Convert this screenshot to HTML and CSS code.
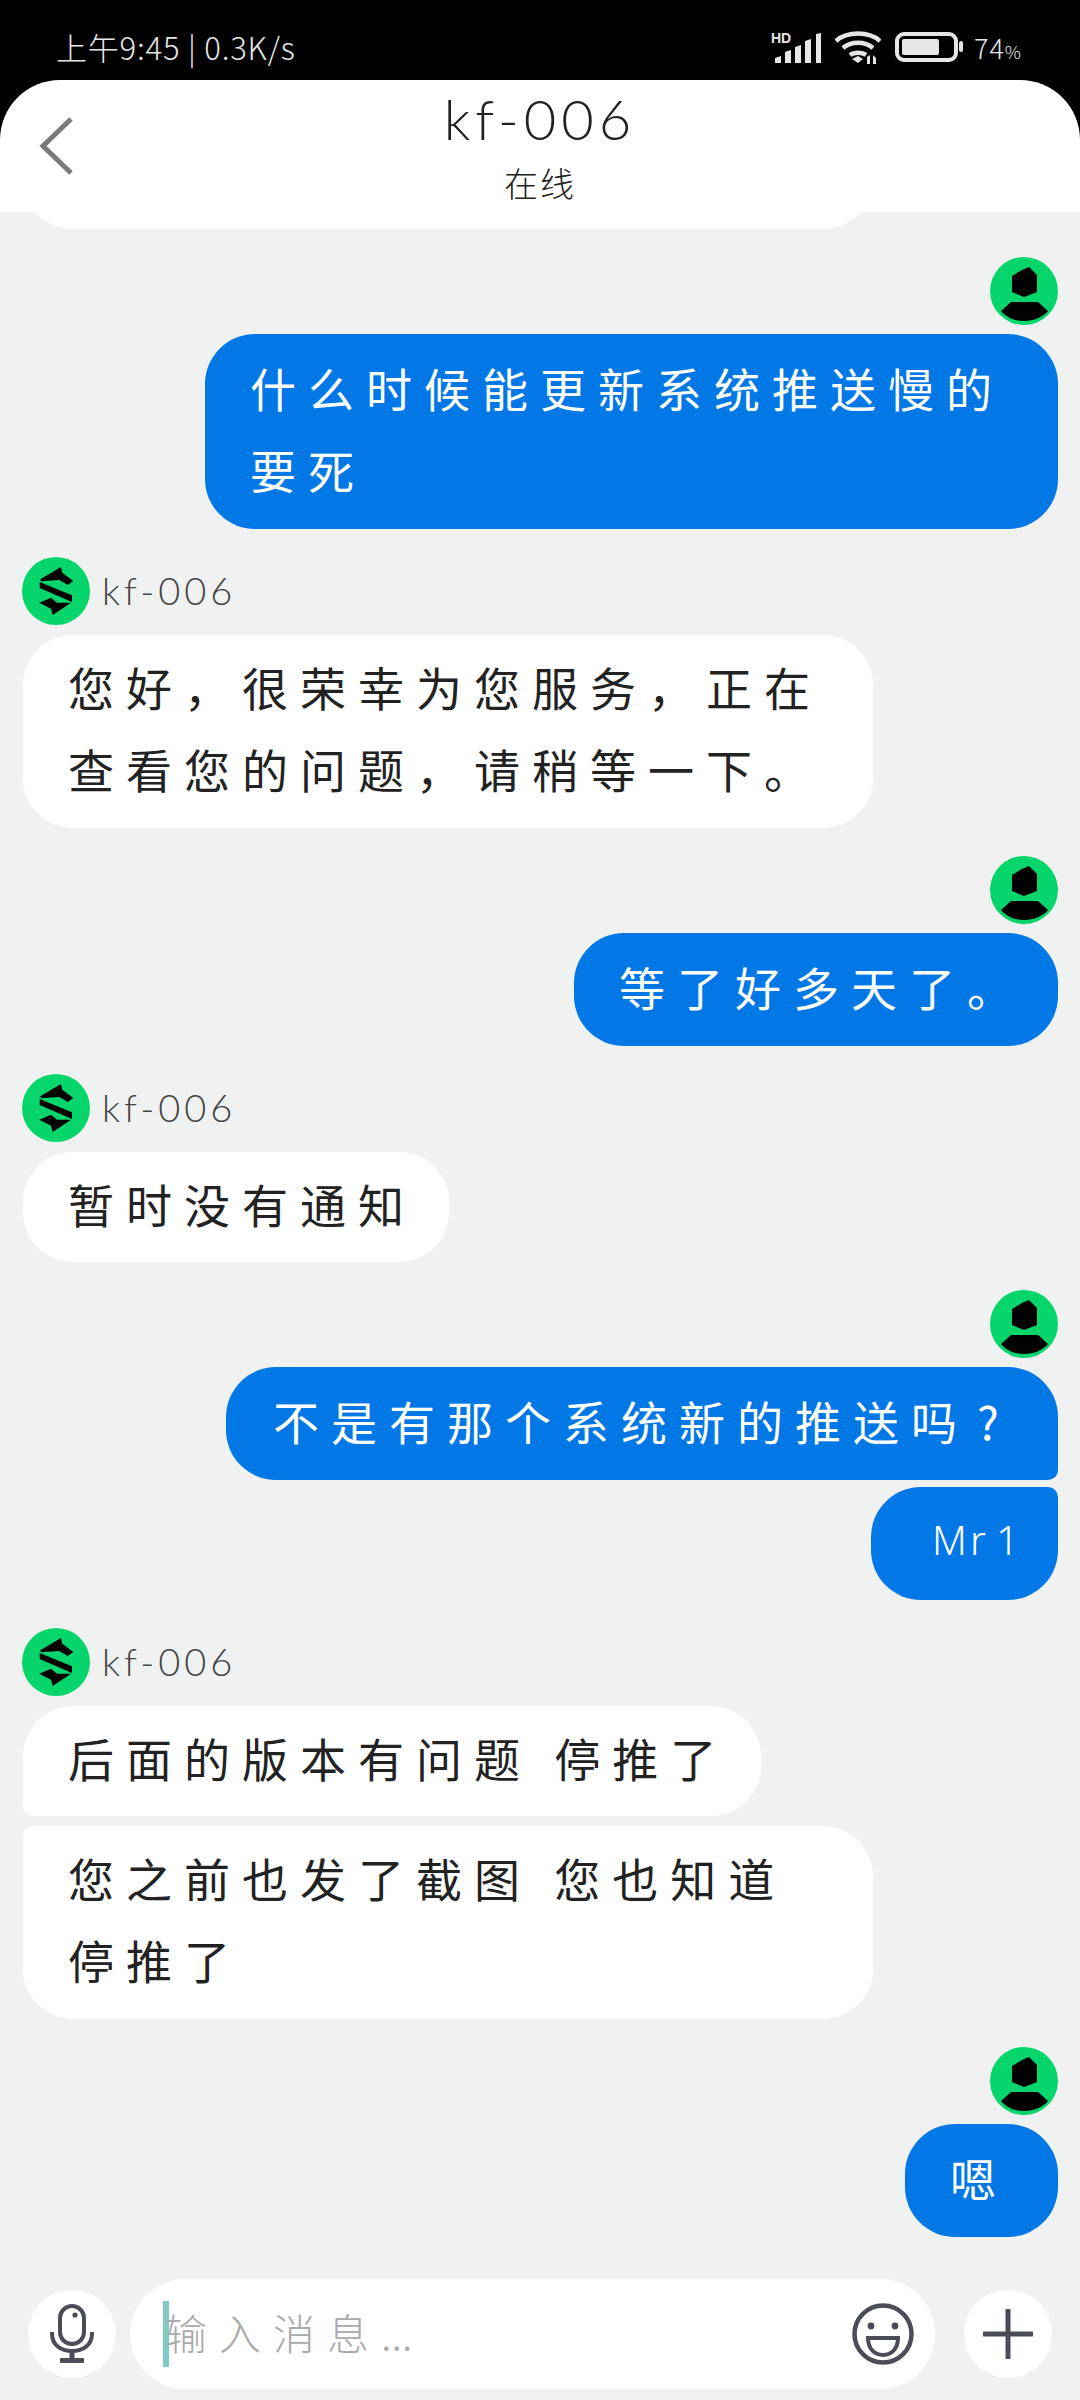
FILE: index.html
```html
<!DOCTYPE html>
<html lang="zh">
<head>
<meta charset="utf-8">
<title>kf-006</title>
<link rel="stylesheet" href="styles.css">
</head>
<body>
<div class="phone">
  <div class="status">
    <div class="status-left">上午9:45 | 0.3K/s</div>
    <div class="status-right">
      <svg class="ic-signal" width="50" height="35" viewBox="0 -4 50 35"><text class="hd" x="0" y="11">HD</text><path fill="#e6e6e6" d="M4 26l6-2v7H4zM14 20l6-2v13h-6zM24 15l6-2v18h-6zM34 9l6-2v24h-6zM45 2l5-1v30h-5z"/></svg>
      <svg class="ic-wifi" width="46" height="33" viewBox="0 0 46 33"><g fill="none" stroke="#e6e6e6" stroke-width="4.5"><path d="M1 10C12 0 34 0 45 10"/><path d="M8 17c8-7 22-7 30 0"/><path d="M15 24c4-3 12-3 16 0"/></g><path fill="#e6e6e6" d="M17 28l6-3 5 3-5 4zM32 33v-7l3-2v9zM38 33v-9l3 3v6z"/></svg>
      <svg class="ic-batt" width="68" height="30" viewBox="0 0 68 30"><rect x="2" y="2" width="59" height="26" rx="7" fill="none" stroke="#e6e6e6" stroke-width="4"/><rect x="7" y="7" width="37" height="16" rx="2" fill="#e6e6e6"/><rect x="64" y="9" width="4" height="11" rx="2" fill="#e6e6e6"/></svg>
      <span class="batt-num">74<small>%</small></span>
    </div>
  </div>

  <header class="head">
    <svg class="back" width="36" height="60" viewBox="0 0 36 60"><path d="M33 3L5 30l28 27" fill="none" stroke="#7a7a7a" stroke-width="5"/></svg>
    <div class="head-title">kf-006</div>
    <div class="head-sub">在线</div>
  </header>

  <main class="chat">
    <div class="bubble them cut"></div>

    <div class="who me"><svg class="av" viewBox="0 0 68 68"><use href="#user"/></svg></div>
    <div class="bubble me wide">什么时候能更新系统推送慢的要死</div>

    <div class="who"><svg class="av" viewBox="0 0 68 68"><use href="#logo"/></svg><span class="name">kf-006</span></div>
    <div class="bubble them wide">您好，很荣幸为您服务，正在查看您的问题，请稍等一下。</div>

    <div class="who me"><svg class="av" viewBox="0 0 68 68"><use href="#user"/></svg></div>
    <div class="bubble me">等了好多天了。</div>

    <div class="who"><svg class="av" viewBox="0 0 68 68"><use href="#logo"/></svg><span class="name">kf-006</span></div>
    <div class="bubble them">暂时没有通知</div>

    <div class="who me"><svg class="av" viewBox="0 0 68 68"><use href="#user"/></svg></div>
    <div class="bubble me first long">不是有那个系统新的推送吗<span class="q">?</span></div>
    <div class="bubble me last mr">Mr 1</div>

    <div class="who"><svg class="av" viewBox="0 0 68 68"><use href="#logo"/></svg><span class="name">kf-006</span></div>
    <div class="bubble them first">后面的版本有问题 停推了</div>
    <div class="bubble them last wide">您之前也发了截图 您也知道停推了</div>

    <div class="who me"><svg class="av" viewBox="0 0 68 68"><use href="#user"/></svg></div>
    <div class="bubble me single">嗯</div>
  </main>

  <footer class="bar">
    <div class="round">
      <svg width="44" height="60" viewBox="0 0 44 60"><g fill="none" stroke="#4a4d57" stroke-width="4"><rect x="10" y="2" width="24" height="38" rx="12"/><path d="M2 28v2c0 11 9 17 20 17s20-6 20-17v-2"/><path d="M22 47v9" stroke-width="5"/></g><circle cx="25" cy="11" r="2.6" fill="#4a4d57"/><rect x="10" y="54" width="24" height="5" rx="1" fill="#4a4d57"/></svg>
    </div>
    <div class="input">
      <span class="caret"></span>
      <span class="ph">输入消息<span class="dots">...</span></span>
      <svg class="smile" width="62" height="62" viewBox="0 0 62 62"><circle cx="31" cy="31" r="28.5" fill="none" stroke="#4a4d57" stroke-width="4.5"/><circle cx="19" cy="23" r="3.4" fill="#4a4d57"/><circle cx="43" cy="23" r="3.4" fill="#4a4d57"/><path d="M16 35h30c0 10-6 17-15 17s-15-7-15-17z" fill="none" stroke="#4a4d57" stroke-width="4"/></svg>
    </div>
    <div class="round plus">
      <svg width="50" height="50" viewBox="0 0 50 50"><path d="M25 1v48M1 25h48" stroke="#4a4d57" stroke-width="5" stroke-linecap="round"/></svg>
    </div>
  </footer>
</div>

<svg class="defs" width="0" height="0">
  <symbol id="user" viewBox="0 0 68 68">
    <circle cx="34" cy="34" r="34" fill="#05d56a"/>
    <path d="M39 10l8 8v17l-13 5-12-5V19l10-6z" fill="#000"/>
    <path d="M21 45h27l10 9C53 60 44 64 34 64S16 60 11 54z" fill="#000"/>
  </symbol>
  <symbol id="logo" viewBox="0 0 68 68">
    <circle cx="34" cy="34" r="34" fill="#05d56a"/>
    <path d="M18.3 22.3L39 10l1.3 5.7L51.3 24l-5.6 4-8.4-5-18.3 1.3zM17.7 25L50 38.3V45L17.7 31zM17.3 45.7L29 40.7l6 5h14L30.7 58 29 51.7z" fill="#000"/>
  </symbol>
</svg>
</body>
</html>
```
FILE: styles.css
```css
* { box-sizing: border-box; }
html, body { margin: 0; padding: 0; }
body { width: 1080px; height: 2400px; overflow: hidden; background: #000; font-family: "Noto Sans CJK SC", "Noto Sans", sans-serif; }
.phone { width: 1080px; height: 2400px; display: flex; flex-direction: column; background: #000; }
.defs { display: block; height: 0; }

.status { height: 80px; flex: none; display: flex; align-items: center; justify-content: space-between; padding: 14px 58px 0 56px; color: #e6e6e6; }
.status-left { font-size: 31px; font-weight: 300; line-height: 36px; letter-spacing: 0.8px; }
.status-right { display: flex; align-items: center; gap: 14px; }
.ic-signal { margin-top: -4px; }
.hd { font: 700 14px "Liberation Sans", sans-serif; fill: #e6e6e6; }
.batt-num { font-size: 27px; font-weight: 300; letter-spacing: 1px; margin-left: -3px; }
.batt-num small { font-size: 18px; }

.head { height: 132px; flex: none; background: #fff; border-radius: 60px 60px 0 0; display: flex; flex-direction: column; align-items: center; position: relative; z-index: 2; }
.back { position: absolute; left: 38px; top: 36px; }
.head-title { font-family: "Lato", "Noto Sans", sans-serif; font-weight: 300; font-size: 56px; line-height: 70px; letter-spacing: 5px; color: #222; margin-top: 4px; }
.head-sub { font-size: 34px; line-height: 44px; font-weight: 300; letter-spacing: 2px; color: #222; margin-top: 7px; }

.chat { flex: 1; min-height: 0; overflow: hidden; background: #f0f2f2; display: flex; flex-direction: column; padding: 0 22px; }
.who { height: 68px; display: flex; align-items: center; gap: 12px; margin-top: 28px; flex: none; }
.who.me { justify-content: flex-end; }
.av { width: 68px; height: 68px; flex: none; display: block; }
.name { font-family: "Lato", "Noto Sans", sans-serif; font-weight: 300; font-size: 38px; letter-spacing: 4px; color: #444; margin-top: -2px; }

.bubble { font-size: 46px; line-height: 82px; letter-spacing: 12px; padding: 12px 33px 19px 45px; border-radius: 50px; margin-top: 9px; flex: none; width: fit-content; }
.them { background: #fff; color: #222; align-self: flex-start; margin-left: 1px; padding-top: 10px; padding-bottom: 18px; }
.bubble.them { margin-top: 10px; }
.me { align-self: flex-end; }
.bubble.me { background: #0277e6; color: #fff; }
.bubble.me.wide { width: 853px; }
.bubble.them.wide { width: 850px; padding-bottom: 19px; }
.bubble.cut { width: 850px; height: 100px; margin-top: -83px; padding: 0; }
.bubble.long { width: 832px; white-space: nowrap; padding-left: 47px; padding-right: 20px; }
.q { padding-left: 8px; }
.bubble.me.first { border-bottom-right-radius: 10px; }
.bubble.me.last { border-top-right-radius: 10px; margin-top: 7px; }
.bubble.them.first { border-bottom-left-radius: 10px; }
.bubble.them.last { border-top-left-radius: 10px; }
.bubble.mr { font-family: "Noto Sans", sans-serif; font-weight: 300; font-size: 40px; letter-spacing: 3px; word-spacing: -6px; padding-left: 61px; padding-right: 20px; width: 187px; white-space: nowrap; }
.bubble.single { width: 153px; }

.bar { height: 140px; flex: none; background: #f0f2f2; display: flex; align-items: flex-end; padding: 0 28px 11px; gap: 14px; }
.round { width: 88px; height: 88px; border-radius: 50%; background: #fff; display: flex; align-items: center; justify-content: center; margin-bottom: 11px; flex: none; }
.plus { margin-left: 15px; }
.input { flex: 1; height: 110px; border-radius: 55px; background: #fff; display: flex; align-items: center; padding: 0 21px 0 33px; }
.caret { width: 6px; height: 66px; background: #80cbc4; flex: none; }
.ph { font-size: 42px; font-weight: 300; letter-spacing: 12px; color: #aaa; flex: 1; margin-left: -4px; margin-top: -6px; }
.dots { letter-spacing: 0; }
.smile { flex: none; }
```
